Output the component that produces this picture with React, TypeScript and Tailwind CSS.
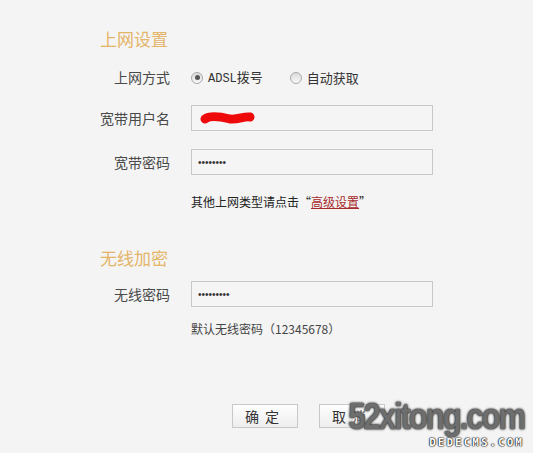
import React from 'react';

const cjk = { fontFamily: '"Noto Sans CJK SC", "Liberation Sans", sans-serif' };

function Radio({ checked }: { checked?: boolean }) {
  return (
    <span className="flex h-[12px] w-[12px] items-center justify-center rounded-full border border-[#a8a8a8] bg-gradient-to-b from-[#dcdcdc] to-[#f8f8f8]">
      {checked && <span className="h-[5px] w-[5px] rounded-full bg-[#555]" />}
    </span>
  );
}

function Field({ label, children }: { label: string; children: React.ReactNode }) {
  return (
    <div className="flex items-center">
      <span className="w-[70px] text-right text-[14px] text-[#4a4a4a]">{label}</span>
      <div className="ml-[21px]">{children}</div>
    </div>
  );
}

function Input({ value, scribble }: { value?: string; scribble?: boolean }) {
  return (
    <div
      className="relative flex h-[26px] w-[242px] items-center border border-[#c8c8c8] bg-[#f5f5f5] pl-[6px] text-[10px] tracking-[0px] text-[#333]"
      style={{ fontFamily: '"Liberation Sans", sans-serif' }}
    >
      {value}
      {scribble && (
        <svg className="absolute left-[8px] top-[5px]" width="60" height="16" viewBox="0 0 60 16">
          <path d="M5 8 C 10 4, 22 6, 30 8 C 38 9, 44 5, 50 6" stroke="#ee0a0a" strokeWidth="9" strokeLinecap="round" fill="none" />
        </svg>
      )}
    </div>
  );
}

export default function App() {
  return (
    <div className="relative h-[453px] w-[533px] overflow-hidden bg-[#f4f4f4]" style={cjk}>
      <div className="flex flex-col pl-[100px] pt-[29px]">
        <h2 className="h-[20px] text-[17px] leading-[20px] text-[#e4b46a]">上网设置</h2>

        <div className="mt-[18px] h-[20px]">
          <Field label="上网方式">
            <div className="flex items-center text-[13px] text-[#333]">
              <Radio checked />
              <span className="ml-[5px]">
                <span className="text-[12px]" style={{ fontFamily: '"Liberation Mono", monospace' }}>ADSL</span>拨号
              </span>
              <span className="ml-[27px]"><Radio /></span>
              <span className="ml-[5px]">自动获取</span>
            </div>
          </Field>
        </div>

        <div className="mt-[18px]">
          <Field label="宽带用户名">
            <Input scribble />
          </Field>
        </div>

        <div className="mt-[18px]">
          <Field label="宽带密码">
            <Input value="••••••••" />
          </Field>
        </div>

        <p className="ml-[91px] mt-[19px] h-[16px] text-[12px] leading-[16px] text-[#222]">
          其他上网类型请点击“<a className="text-[#a82a2a] underline">高级设置</a>”
        </p>

        <h2 className="mt-[38px] h-[20px] text-[17px] leading-[20px] text-[#e4b46a]">无线加密</h2>

        <div className="mt-[13px]">
          <Field label="无线密码">
            <Input value="•••••••••" />
          </Field>
        </div>

        <p className="ml-[91px] mt-[14px] h-[16px] text-[12px] leading-[16px] text-[#444]">
          默认无线密码（12345678）
        </p>

        <div className="ml-[132px] mt-[67px] flex gap-[21px]">
          <button className="h-[24px] w-[66px] border border-[#c8c8c8] bg-gradient-to-b from-white to-[#ededed] text-[14px] tracking-[6px] text-[#333]">
            确定
          </button>
          <button className="h-[24px] w-[66px] border border-[#c8c8c8] bg-gradient-to-b from-white to-[#ededed] text-[14px] tracking-[6px] text-[#333]">
            取消
          </button>
        </div>
      </div>

      <div className="absolute left-[354px] top-[399px] flex w-[170px] flex-col items-end">
        <span
          className="origin-right scale-y-[1.2] text-[31px] font-bold leading-[36px] tracking-[-2px] text-[#6e6e6e]"
          style={{
            fontFamily: '"Liberation Sans", sans-serif',
            textShadow: '0 0 2px #222, 0 0 2px #222, 0 0 4px #fff',
          }}
        >
          52xitong.com
        </span>
        <span
          className="mt-[2px] text-[11px] font-bold leading-[11px] tracking-[2px] text-white"
          style={{ fontFamily: '"DejaVu Sans Mono", monospace', textShadow: '0 0 1px #000, 0 0 1px #000, 0 0 2px #000' }}
        >
          DEDECMS.COM
        </span>
      </div>
    </div>
  );
}
